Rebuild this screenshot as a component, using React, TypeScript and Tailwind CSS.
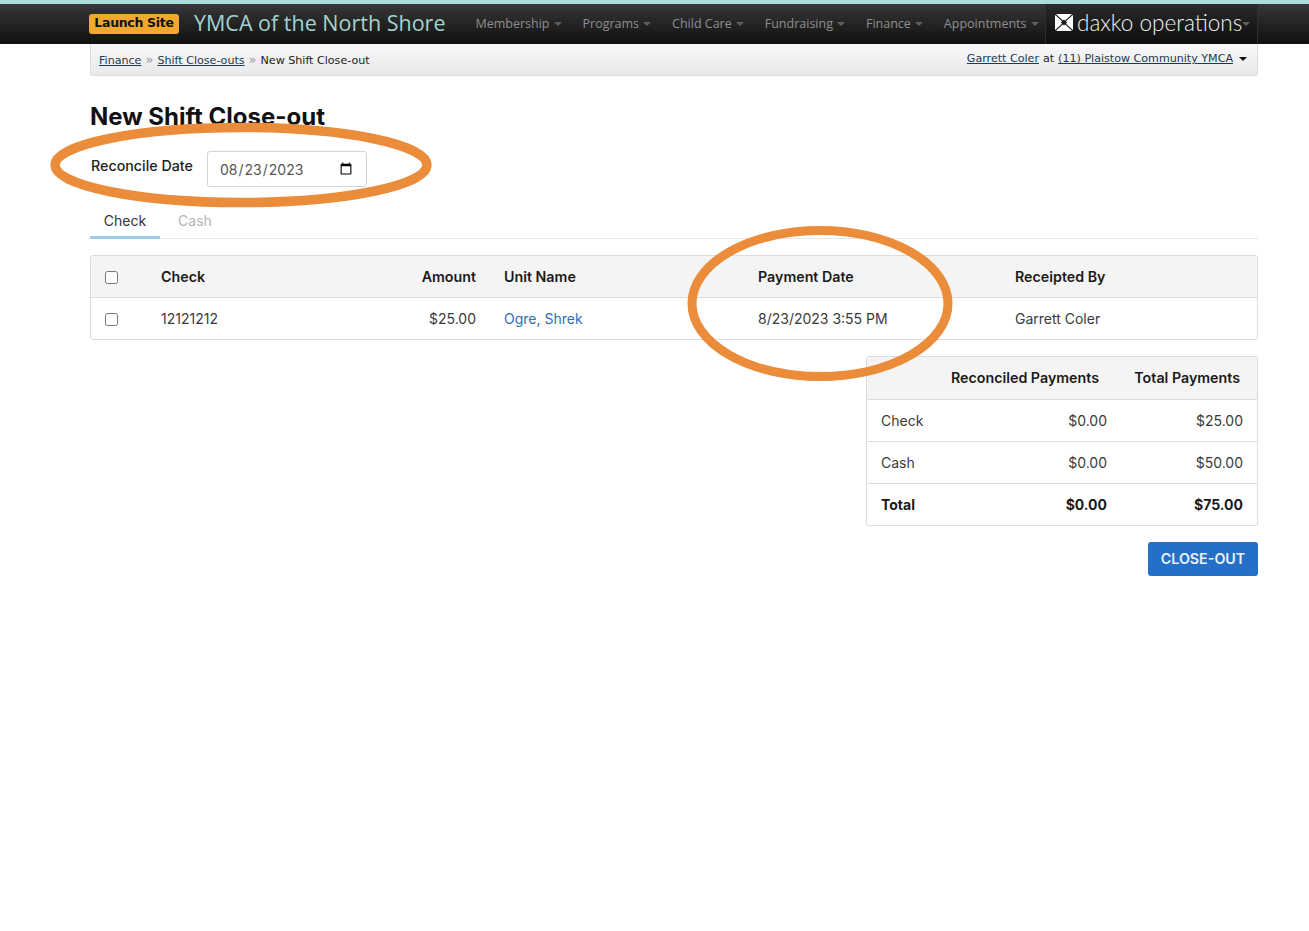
const navItems = ["Membership", "Programs", "Child Care", "Fundraising", "Finance", "Appointments"];

const Caret = ({ className }: { className: string }) => (
  <span className={`inline-block w-0 h-0 border-x-[4px] border-x-transparent border-t-[4px] ${className}`} />
);

const App = () => {
  return (
    <div className="relative min-h-[931px] bg-white font-['Inter',sans-serif] text-[14px] text-[#3a3a3a]">
      <div className="h-1 bg-[#a9dedb]" />
      <nav className="h-10 bg-gradient-to-b from-[#373737] to-[#111111]">
        <div className="ml-[89px] w-[1169px] h-full flex items-center">
          <span className="h-5 w-[90px] pb-[2px] flex items-center justify-center rounded-[3px] bg-[#f0a92e] text-[#111] text-[12.5px] font-bold font-['DejaVu_Sans',sans-serif] tracking-[-0.3px]">
            Launch Site
          </span>
          <span className="ml-[15px] -mt-[2px] text-[#a3d3d0] text-[21.5px] font-['Open_Sans',sans-serif]">YMCA of the North Shore</span>
          <ul className="ml-[30px] flex items-center gap-[21px] text-[12.5px] text-[#8f8f8f] font-['Open_Sans',sans-serif]">
            {navItems.map((item) => (
              <li key={item} className="flex items-center gap-[4px]">
                {item}
                <Caret className="border-t-[#5f5f5f]" />
              </li>
            ))}
          </ul>
          <div className="ml-auto w-[213px] h-full flex items-center border-x border-[#2e2e2e] bg-gradient-to-b from-[#2a2a2a] to-[#0e0e0e] pl-[9px]">
            <svg width="18" height="17" viewBox="0 0 18 17" className="shrink-0 -mt-[3px]">
              <rect width="18" height="17" rx="2" fill="#fff" />
              <path d="M0 0 L18 17 M18 0 L0 17" stroke="#1c1c1c" strokeWidth="1.2" />
              <path d="M9 5.5 L12.2 8.5 L9 11.5 L5.8 8.5 Z" fill="#1c1c1c" />
            </svg>
            <span className="ml-[4px] -mt-[3px] text-[#f2f2f2] text-[22.5px] font-light font-['Lato',sans-serif]">daxko operations</span>
            <Caret className="border-t-[#5f5f5f]" />
          </div>
        </div>
      </nav>

      <div className="ml-[90px] w-[1168px] h-8 pt-[4px] flex items-center justify-between pl-[8px] pr-[10px] rounded-b-[3px] border-x border-b border-[#dcdcdc] bg-gradient-to-b from-[#f8f8f8] to-[#e9e9e9] font-['DejaVu_Sans',sans-serif] text-[11.1px] text-[#222]">
        <div className="flex items-center gap-[4px]">
          <a className="underline text-[#1d3a52]">Finance</a>
          <span className="-mt-[3px] text-[#999] text-[13px] leading-none">»</span>
          <a className="underline text-[#1d3a52]">Shift Close-outs</a>
          <span className="-mt-[3px] text-[#999] text-[13px] leading-none">»</span>
          <span>New Shift Close-out</span>
        </div>
        <div className="flex items-center gap-[4px] -mt-[4px]">
          <a className="underline text-[#1d3a52]">Garrett Coler</a>
          <span>at</span>
          <a className="underline text-[#1d3a52]">(11) Plaistow Community YMCA</a>
          <Caret className="ml-[2px] border-t-[#111]" />
        </div>
      </div>

      <main className="ml-[90px] w-[1168px]">
        <h1 className="mt-[25px] text-[24px] leading-[32px] font-bold text-[#111]">New Shift Close-out</h1>

        <div className="mt-[18px] flex items-center">
          <label className="ml-px w-[116px] text-[14.25px] font-medium text-[#222] -mt-[6px]">Reconcile Date</label>
          <input
            type="date"
            defaultValue="2023-08-23"
            className="w-40 h-9 pl-[11px] pr-[11px] rounded-[3px] border border-[#d4d4d8] text-[#555] text-[14px]"
          />
        </div>

        <div className="mt-[16px] flex border-b border-[#e8e8e8] h-[36px]">
          <span className="w-[70px] h-[36px] text-center leading-[36px] border-b-[3px] border-[#9ccbee] text-[#333]">Check</span>
          <span className="w-[70px] h-[36px] text-center leading-[36px] text-[#b4b4b4]">Cash</span>
        </div>

        <div className="mt-4 rounded-[3px] border border-[#dcdcdc] overflow-hidden">
          <table className="w-full table-fixed border-collapse">
            <colgroup>
              <col className="w-[56px]" />
              <col className="w-[194px]" />
              <col className="w-[149px]" />
              <col className="w-[254px]" />
              <col className="w-[257px]" />
              <col />
            </colgroup>
            <thead>
              <tr className="h-[41px] bg-[#f4f4f4] border-b border-[#dcdcdc] text-[#1a1a1a] text-[14.25px]">
                <th className="pl-[14px] pt-[2px] text-left"><input type="checkbox" className="block" /></th>
                <th className="pl-[14px] text-left font-semibold">Check</th>
                <th className="pr-[14px] text-right font-semibold">Amount</th>
                <th className="pl-[14px] text-left font-semibold">Unit Name</th>
                <th className="pl-[14px] text-left font-semibold">Payment Date</th>
                <th className="pl-[14px] text-left font-semibold">Receipted By</th>
              </tr>
            </thead>
            <tbody>
              <tr className="h-[42px]">
                <td className="pl-[14px] pt-[2px]"><input type="checkbox" className="block" /></td>
                <td className="pl-[14px]">12121212</td>
                <td className="pr-[14px] text-right">$25.00</td>
                <td className="pl-[14px] text-[#2f6db5]">Ogre, Shrek</td>
                <td className="pl-[14px]">8/23/2023 3:55 PM</td>
                <td className="pl-[14px]">Garrett Coler</td>
              </tr>
            </tbody>
          </table>
        </div>

        <div className="mt-4 ml-auto w-[392px] rounded-[3px] border border-[#dcdcdc] overflow-hidden">
          <table className="w-full table-fixed border-collapse">
            <colgroup>
              <col className="w-[72px]" />
              <col className="w-[168px]" />
              <col />
            </colgroup>
            <thead>
              <tr className="h-[42px] bg-[#f4f4f4] border-b border-[#dcdcdc] text-[#1a1a1a] text-[14.25px]">
                <th />
                <th className="pr-[8px] text-right font-semibold whitespace-nowrap">Reconciled Payments</th>
                <th className="pr-[17px] text-right font-semibold whitespace-nowrap">Total Payments</th>
              </tr>
            </thead>
            <tbody>
              <tr className="h-[42px] border-b border-[#dcdcdc]">
                <td className="pl-[14px]">Check</td>
                <td className="text-right">$0.00</td>
                <td className="pr-[14px] text-right">$25.00</td>
              </tr>
              <tr className="h-[42px] border-b border-[#dcdcdc]">
                <td className="pl-[14px]">Cash</td>
                <td className="text-right">$0.00</td>
                <td className="pr-[14px] text-right">$50.00</td>
              </tr>
              <tr className="h-[42px] font-bold text-[#1a1a1a]">
                <td className="pl-[14px]">Total</td>
                <td className="text-right">$0.00</td>
                <td className="pr-[14px] text-right">$75.00</td>
              </tr>
            </tbody>
          </table>
        </div>

        <div className="mt-4 flex justify-end">
          <button className="w-[110px] h-[34px] rounded-[3px] bg-[#2470c8] text-[#e8f1fb] text-[14.25px] font-semibold">CLOSE-OUT</button>
        </div>
      </main>

      {/* hand-drawn annotation rings */}
      <svg className="absolute left-0 top-0 pointer-events-none" width="1309" height="931">
        <ellipse cx="241" cy="165" rx="186" ry="37.5" fill="none" stroke="#ea8c3a" strokeWidth="9.5" />
        <ellipse cx="820" cy="303.5" rx="128" ry="73" fill="none" stroke="#ea8c3a" strokeWidth="9" />
      </svg>
    </div>
  );
};

export default App;
